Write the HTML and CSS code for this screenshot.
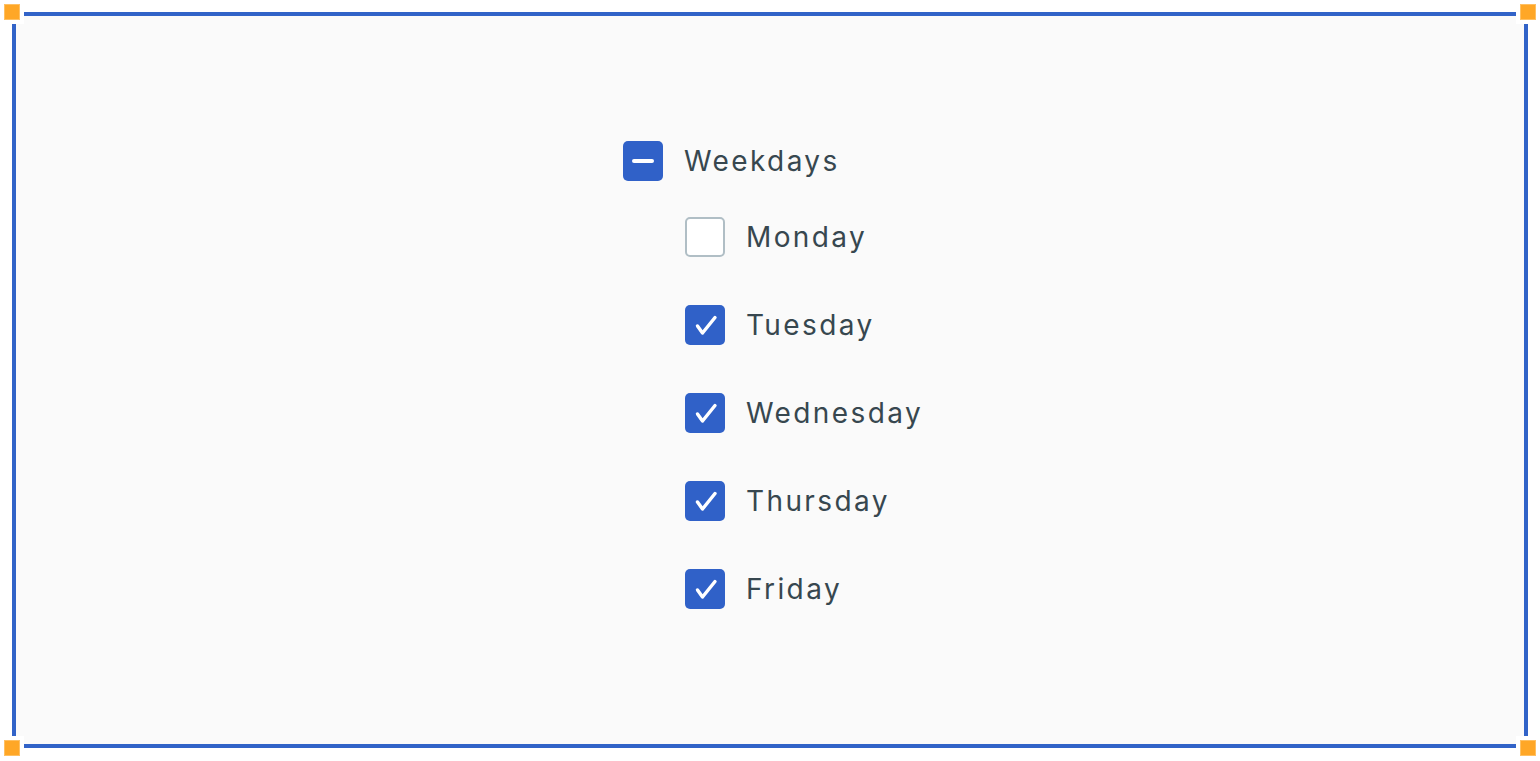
FILE: index.html
```html
<!DOCTYPE html>
<html>
<head>
    <link rel="stylesheet" href="styles.css">
</head>

<body>
    <div class="frame">
        <span class="handle tl"></span>
        <span class="handle tr"></span>
        <span class="handle bl"></span>
        <span class="handle br"></span>

        <div class="tree">
            <label class="row parent">
                <span class="box on">
                    <svg width="40" height="40" viewBox="0 0 40 40"><path d="M11 20h18" stroke="#fff" stroke-width="4" stroke-linecap="round"/></svg>
                </span>
                Weekdays
            </label>
            <div class="children">
                <label class="row">
                    <span class="box"></span>
                    Monday
                </label>
                <label class="row">
                    <span class="box on">
                        <svg width="40" height="40" viewBox="0 0 40 40"><path d="M12.5 21l5 7 12.5-15.5" fill="none" stroke="#fff" stroke-width="3.4" stroke-linecap="round" stroke-linejoin="round"/></svg>
                    </span>
                    Tuesday
                </label>
                <label class="row">
                    <span class="box on">
                        <svg width="40" height="40" viewBox="0 0 40 40"><path d="M12.5 21l5 7 12.5-15.5" fill="none" stroke="#fff" stroke-width="3.4" stroke-linecap="round" stroke-linejoin="round"/></svg>
                    </span>
                    Wednesday
                </label>
                <label class="row">
                    <span class="box on">
                        <svg width="40" height="40" viewBox="0 0 40 40"><path d="M12.5 21l5 7 12.5-15.5" fill="none" stroke="#fff" stroke-width="3.4" stroke-linecap="round" stroke-linejoin="round"/></svg>
                    </span>
                    Thursday
                </label>
                <label class="row">
                    <span class="box on">
                        <svg width="40" height="40" viewBox="0 0 40 40"><path d="M12.5 21l5 7 12.5-15.5" fill="none" stroke="#fff" stroke-width="3.4" stroke-linecap="round" stroke-linejoin="round"/></svg>
                    </span>
                    Friday
                </label>
            </div>
        </div>
    </div>
</body>
</html>
```

FILE: styles.css
```css
body {
    margin: 0;
    background: #ffffff;
    font-family: Inter, "Noto Sans", sans-serif;
}

.frame {
    position: relative;
    box-sizing: border-box;
    margin: 12px;
    width: 1516px;
    height: 736px;
    border: 4px solid #3163c8;
    background: #fafafa;
    display: flex;
    justify-content: center;
    align-items: flex-start;
    padding-top: 125px;
}

.handle {
    position: absolute;
    width: 16px;
    height: 16px;
    background: #ffa726;
    border: 4px solid #ffffff;
    box-shadow: inset 0 0 0 1px #ffc062;
}

.tl { top: -16px; left: -16px; }
.tr { top: -16px; right: -16px; }
.bl { bottom: -16px; left: -16px; }
.br { bottom: -16px; right: -16px; }

.tree {
    display: flex;
    flex-direction: column;
    margin-left: 6px;
}

.row {
    display: flex;
    align-items: center;
    gap: 21px;
    height: 40px;
    font-size: 28px;
    line-height: 42px;
    letter-spacing: 2.4px;
    color: #37474f;
}

.children {
    display: flex;
    flex-direction: column;
    gap: 48px;
    margin-top: 36px;
    padding-left: 62px;
}

.box {
    box-sizing: border-box;
    width: 40px;
    height: 40px;
    flex: none;
    border-radius: 5px;
    background: #ffffff;
    border: 2px solid #b0bec5;
    display: flex;
    align-items: center;
    justify-content: center;
}

.box.on {
    background: #3061c8;
    border: none;
}
```
